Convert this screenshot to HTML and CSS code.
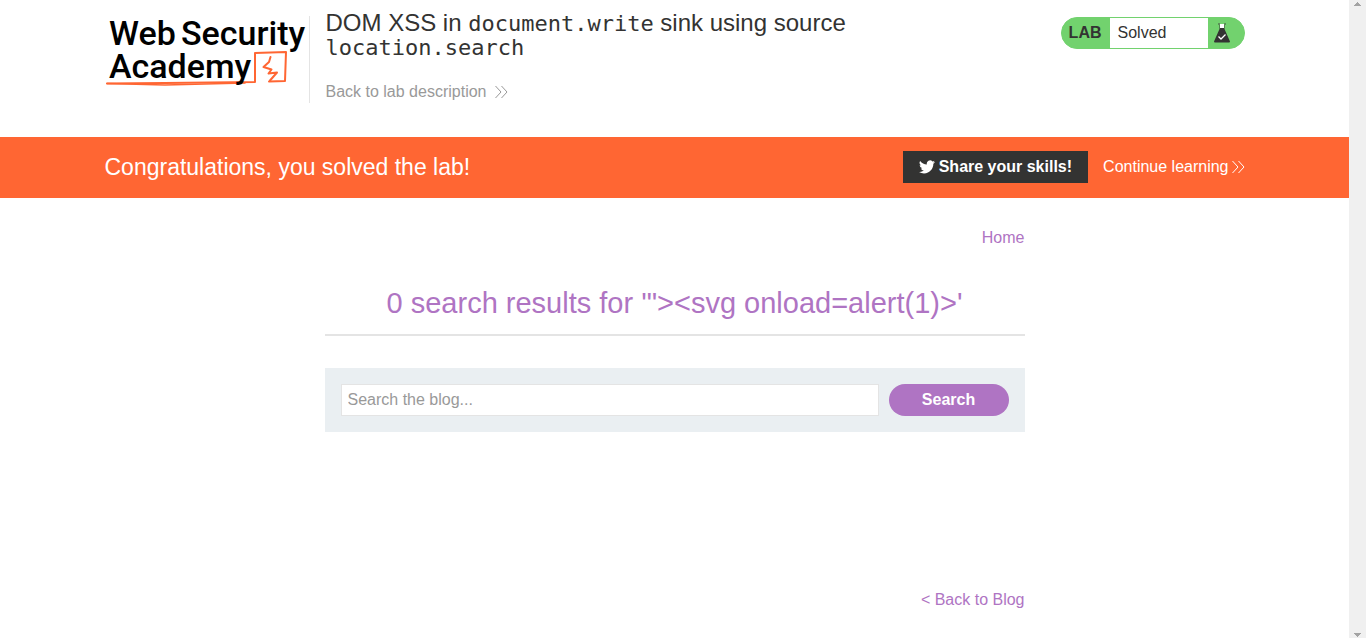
FILE: index.html
```html
<!DOCTYPE html>
<html lang="en">
<head>
<meta charset="utf-8">
<title>DOM XSS in document.write sink using source location.search</title>
<link rel="stylesheet" href="styles.css">
</head>
<body>
<div class="viewport">
  <div class="page">
    <header class="lab-header container">
      <a class="logo" href="#" aria-label="Web Security Academy">
        <svg class="logo-art" viewBox="0 0 200 76" width="200" height="76">
          <g fill="none" stroke="#ff6633" stroke-linejoin="round" stroke-linecap="round">
            <path d="M2 67.500L60 67L150 66L150 37L181 36L180 65L164 65.500" stroke-width="2"/>
            <path d="M2 67.500L60 69L140 67" stroke-width="1.500"/>
            <path d="M165.500 41L164 46L158.500 51L166.500 53.500L163.500 57.500L172 56.500L165 64.500" stroke-width="2"/>
          </g>
          <g class="logo-text">
            <text x="4" y="29">Web</text>
            <text x="76" y="29">Security</text>
            <text x="4" y="62">Academy</text>
          </g>
        </svg>
      </a>
      <div class="title-block">
        <h1 class="lab-title">DOM XSS in <code>document.write</code> sink using source <code>location.search</code></h1>
        <a class="back-link" href="#">Back to lab description
          <svg width="14" height="14" viewBox="0 0 14 14"><path d="M1.500 1L7 7L1.500 13M7.500 1L13 7L7.500 13" fill="none" stroke="currentColor"/></svg>
        </a>
      </div>
      <div class="status">
        <span class="status-tag">LAB</span>
        <span class="status-text">Solved</span>
        <span class="status-icon">
          <svg width="18" height="20" viewBox="0 0 18 20">
            <path d="M6.500 1H11.500V6L17 18.500Q17 19.500 16 19.500H2Q1 19.500 1 18.500L6.500 6Z" fill="#333332"/>
            <path d="M7 1H11V5H7Z" fill="#fff"/>
            <path d="M5 0H7V2H5ZM11 0H13V2H11Z" fill="#5a8f57"/>
            <path d="M5.500 13.500L8 16L12.500 11.500" fill="none" stroke="#fff" stroke-width="1.300"/>
          </svg>
        </span>
      </div>
    </header>

    <section class="banner">
      <div class="container banner-row">
        <h2 class="banner-title">Congratulations, you solved the lab!</h2>
        <button class="share" type="button">
          <svg width="16" height="14" viewBox="0 0 24 20"><path d="M24 2.400a10 10 0 0 1-2.800.8A5 5 0 0 0 23.300.500a10 10 0 0 1-3.100 1.200A4.900 4.900 0 0 0 11.800 6.200 14 14 0 0 1 1.700 1a4.900 4.900 0 0 0 1.500 6.600A4.900 4.900 0 0 1 1 7a4.900 4.900 0 0 0 3.900 4.900 5 5 0 0 1-2.200.1 4.900 4.900 0 0 0 4.600 3.400A9.900 9.900 0 0 1 0 17.500a14 14 0 0 0 7.500 2.200c9.200 0 14.300-7.700 14-14.600A10 10 0 0 0 24 2.400z" fill="#fff"/></svg>
          Share your skills!
        </button>
        <a class="continue" href="#">Continue learning
          <svg width="14" height="14" viewBox="0 0 14 14"><path d="M1.500 1L7 7L1.500 13M7.500 1L13 7L7.500 13" fill="none" stroke="currentColor"/></svg>
        </a>
      </div>
    </section>

    <main class="blog">
      <nav class="blog-nav"><a href="#">Home</a></nav>
      <h1 class="results-title">0 search results for '"&gt;&lt;svg onload=alert(1)&gt;'</h1>
      <form class="search">
        <input class="search-box" type="text" placeholder="Search the blog..." aria-label="Search the blog">
        <button class="search-button" type="button">Search</button>
      </form>
      <a class="back-to-blog" href="#">&lt; Back to Blog</a>
    </main>
  </div>
  <div class="scroll-track" aria-hidden="true">
    <svg width="7" height="4" viewBox="0 0 7 4" shape-rendering="crispEdges"><path d="M3 0h1v1h1v1h1v1h1v1H0V3h1V2h1V1h1z" fill="#a3a3a3"/></svg>
    <svg width="7" height="4" viewBox="0 0 7 4" shape-rendering="crispEdges"><path d="M0 0h7v1H6v1H5v1H4v1H3V3H2V2H1V1H0z" fill="#a3a3a3"/></svg>
  </div>
</div>
</body>
</html>
```
FILE: styles.css
```css
* { box-sizing: border-box; }

body {
  margin: 0;
  background: #fff;
  color: #333332;
  font: 16px/24px "Liberation Sans", Arial, sans-serif;
}

h1, h2 { margin: 0; font-weight: 400; }
a { text-decoration: none; }
svg { display: block; flex: none; }

.viewport {
  display: grid;
  grid-template-columns: minmax(0, 1fr) 17px;
  min-height: 100vh;
}

.container {
  width: 100%;
  max-width: 1140px;
  margin: 0 auto;
}

.lab-header {
  display: flex;
  align-items: flex-start;
  padding: 11px 0 33px;
}

.logo {
  margin-top: 5px;
  padding-right: 4px;
  min-height: 87px;
  border-right: 1px solid #e4e4e4;
}

.logo-art { overflow: visible; }

.logo-text {
  font-family: Roboto, sans-serif;
  font-size: 34px;
  font-weight: 500;
  fill: #000;
}

.title-block {
  flex: 1;
  max-width: 560px;
  padding-left: 16px;
}

.lab-title {
  font-size: 24px;
  line-height: 24px;
}

.lab-title code {
  font-family: "DejaVu Sans Mono", monospace;
  font-size: 22px;
  line-height: 1;
}

.back-link {
  display: flex;
  align-items: center;
  gap: 8px;
  margin-top: 21px;
  color: #999;
}

.status {
  display: flex;
  margin: 6px 0 0 auto;
  height: 32px;
  border: 1px solid #72d26e;
  border-radius: 16px;
  background: #72d26e;
  line-height: 30px;
  overflow: hidden;
}

.status-tag { padding: 0 8px 0 7px; font-weight: 700; }
.status-text { width: 98px; padding-left: 8px; background: #fff; }
.status-icon { width: 36px; padding: 5px 0 0 5px; }

.banner { background: #ff6633; color: #fff; }

.banner-row {
  display: flex;
  align-items: center;
  padding: 14px 0 15px;
}

.banner-title { flex: 1; font-size: 23px; line-height: 32px; }

.share {
  display: flex;
  align-items: center;
  gap: 4px;
  height: 32px;
  padding: 0 16px;
  border: 0;
  background: #333332;
  color: #fff;
  font: 700 16px "Liberation Sans", Arial, sans-serif;
}

.continue {
  display: flex;
  align-items: center;
  gap: 2px;
  margin-left: 15px;
  color: #fff;
}

.blog {
  display: flex;
  flex-direction: column;
  width: 100%;
  max-width: 700px;
  margin: 0 auto;
  padding-top: 28px;
}

.blog a { color: #af74c3; }
.blog-nav { text-align: right; }

.results-title {
  margin-top: 33px;
  padding-bottom: 11px;
  border-bottom: 2px solid #e4e4e4;
  color: #af74c3;
  font-size: 29px;
  line-height: 40px;
  text-align: center;
}

.search {
  display: flex;
  gap: 10px;
  margin-top: 32px;
  padding: 16px;
  background: #eaeff2;
}

.search-box {
  flex: 1;
  min-width: 0;
  height: 32px;
  padding: 0 6px;
  border: 1px solid #e4e4e4;
  background: #fff;
  color: #333332;
  font: inherit;
}

.search-box::placeholder { color: #999; }

.search-button {
  width: 120px;
  height: 32px;
  padding: 0;
  border: 0;
  border-radius: 16px;
  background: #af74c3;
  color: #fff;
  font: 700 16px "Liberation Sans", Arial, sans-serif;
}

.back-to-blog { align-self: flex-end; margin-top: 156px; }

.scroll-track {
  display: flex;
  flex-direction: column;
  align-items: center;
  justify-content: space-between;
  padding: 2px 0 1px;
  background: #f0f0f0;
}
```
